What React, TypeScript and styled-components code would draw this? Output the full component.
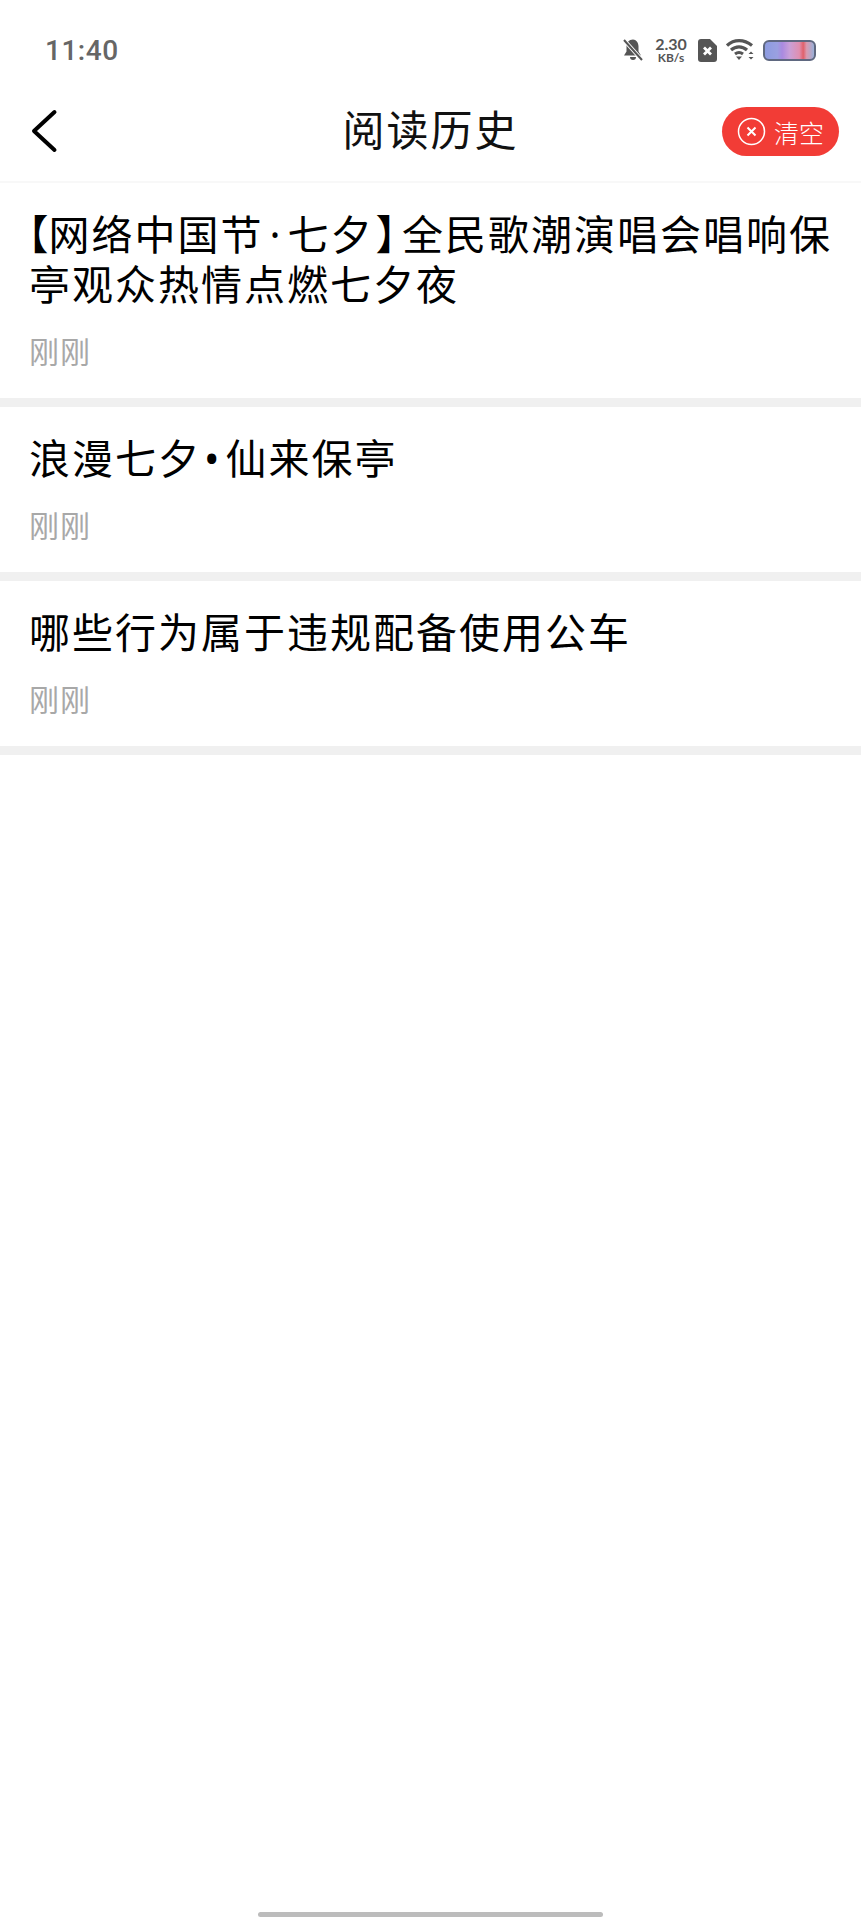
import React from 'react'
import styled, { createGlobalStyle } from 'styled-components'

const items = [
  {
    time: '刚刚',
    title: (
      <>
        <Punct $before={-2} $after={-1}>【</Punct>网络中国节<Punct $before={6} $after={5}>·</Punct>七夕
        <Punct $before={3} $after={3}>】</Punct>全民歌潮演唱会唱响保
        <br />
        亭观众热情点燃七夕夜
      </>
    ),
  },
  {
    time: '刚刚',
    title: (
      <>
        浪漫七夕<Punct $before={3} $after={4}>•</Punct>仙来保亭
      </>
    ),
  },
  { time: '刚刚', title: '哪些行为属于违规配备使用公车' },
]

const App = () => {
  return (
    <Page>
      <GlobalStyle />
      <StatusBar>
        <Time>11:40</Time>
        <StatusIcons>
          <svg width="22" height="24" viewBox="0 0 22 24">
            <path d="M11 1.5c-4 0-6.500 3-6.500 7v5L2 17.500h17l-2.500-4v-5c0-4-2.500-7-5.500-7z" fill="#555" />
            <path d="M8 19h6a3 3 0 0 1-6 0z" fill="#555" />
            <path d="M2 2l18 20" stroke="#fff" strokeWidth="4" />
            <path d="M2 2l18 20" stroke="#555" strokeWidth="2" />
          </svg>
          <NetSpeed>
            <NetValue>2.30</NetValue>
            <NetUnit>KB/s</NetUnit>
          </NetSpeed>
          <svg width="19" height="23" viewBox="0 0 19 23">
            <path d="M3 0h9l7 7v13a3 3 0 0 1-3 3H3a3 3 0 0 1-3-3V3a3 3 0 0 1 3-3z" fill="#555" />
            <path d="M6 8.500l7 7M13 8.500l-7 7" stroke="#fff" strokeWidth="2.800" />
          </svg>
          <svg width="28" height="22" viewBox="0 0 28 22">
            <path d="M1 6.500c7-6.500 17-6.500 25 0" stroke="#555" strokeWidth="3.200" fill="none" />
            <path d="M5 11c4.800-4.200 11.200-4.200 16 0" stroke="#555" strokeWidth="3.200" fill="none" />
            <path d="M9 15c2.800-2.200 5.200-2.200 8 0" stroke="#555" strokeWidth="3" fill="none" />
            <path d="M10 17.500h6L13 21z" fill="#555" />
            <path d="M22.500 15l2.500-2.500 2.500 2.500zM22.500 18l2.500 2.500 2.500-2.500z" fill="#555" />
          </svg>
          <Battery />
        </StatusIcons>
      </StatusBar>
      <Header>
        <BackButton>
          <svg width="30" height="44" viewBox="0 0 30 44">
            <path d="M24.500 3L4 22l20.500 19" stroke="#000" strokeWidth="4" strokeLinecap="round" strokeLinejoin="round" fill="none" />
          </svg>
        </BackButton>
        <HeaderTitle>阅读历史</HeaderTitle>
        <ClearButton>
          <svg width="29" height="29" viewBox="0 0 29 29">
            <circle cx="14.500" cy="14.500" r="13" stroke="#fff" strokeWidth="1.500" fill="none" />
            <path d="M10.500 10.500l8 8M18.500 10.500l-8 8" stroke="#fff" strokeWidth="2" />
          </svg>
          <ClearLabel>清空</ClearLabel>
        </ClearButton>
      </Header>
      <List>
        {items.map((item, i) => (
          <Item key={i}>
            <ItemTitle>{item.title}</ItemTitle>
            <ItemTime>{item.time}</ItemTime>
          </Item>
        ))}
      </List>
      <HomeBar />
    </Page>
  )
}

export default App

function Punct({ $before, $after, children }: { $before: number; $after: number; children: React.ReactNode }) {
  return (
    <PunctMark $before={$before} $after={$after}>
      {children}
    </PunctMark>
  )
}

const GlobalStyle = createGlobalStyle`
  html, body {
    margin: 0;
    padding: 0;
    background: #fff;
  }
`

const Page = styled.div`
  display: flex;
  flex-direction: column;
  width: 861px;
  height: 1920px;
  overflow: hidden;
  background: #fff;
  font-family: "Noto Sans CJK SC", "Noto Sans", sans-serif;
`

const StatusBar = styled.div`
  display: flex;
  align-items: center;
  justify-content: space-between;
  height: 50px;
  padding: 25px 45px 0 45px;
`

const Time = styled.span`
  font-family: Roboto, sans-serif;
  font-size: 28px;
  font-weight: 500;
  letter-spacing: 0.5px;
  color: #666;
`

const StatusIcons = styled.div`
  display: flex;
  align-items: center;
  gap: 9px;
`

const NetSpeed = styled.div`
  display: flex;
  flex-direction: column;
  align-items: center;
  gap: 1px;
  width: 36px;
  font-family: Lato, sans-serif;
  color: #555;
`

const NetValue = styled.span`
  font-size: 16px;
  font-weight: 700;
  line-height: 15px;
`

const NetUnit = styled.span`
  font-size: 12px;
  font-weight: 700;
  line-height: 12px;
`

const Battery = styled.div`
  width: 53px;
  height: 21px;
  box-sizing: border-box;
  border: 2px solid #5f6880;
  border-radius: 6px;
  background: linear-gradient(
    90deg,
    #8c9be0 0%,
    #9aa0e0 25%,
    #a98ae0 35%,
    #c9a0d8 50%,
    #e08fb0 70%,
    #e0606a 78%,
    #d99ab0 85%,
    #9ab0d8 100%
  );
`

const Header = styled.div`
  position: relative;
  display: flex;
  align-items: center;
  justify-content: center;
  height: 106px;
  border-bottom: 2px solid #f8f8f8;
`

const BackButton = styled.div`
  position: absolute;
  left: 30px;
  top: 34px;
  display: flex;
`

const HeaderTitle = styled.h1`
  margin: 0;
  font-size: 42px;
  font-weight: 400;
  letter-spacing: 2px;
  color: #111;
  line-height: 1;
`

const ClearButton = styled.div`
  position: absolute;
  left: 722px;
  top: 32px;
  display: flex;
  align-items: center;
  gap: 8px;
  width: 117px;
  height: 49px;
  box-sizing: border-box;
  padding-left: 15px;
  border-radius: 25px;
  background: #f23c36;
`

const ClearLabel = styled.span`
  font-size: 25px;
  font-weight: 300;
  color: #fff;
`

const List = styled.div`
  display: flex;
  flex-direction: column;
`

const Item = styled.div`
  padding: 26px 29px 26px;
  border-bottom: 9px solid #f0f0f0;
`

const ItemTitle = styled.div`
  font-family: "Noto Sans", "Noto Sans CJK SC", sans-serif;
  font-feature-settings: "palt";
  font-size: 41px;
  font-weight: 400;
  letter-spacing: 2px;
  line-height: 50px;
  color: #000;
`

const PunctMark = styled.span<{ $before: number; $after: number }>`
  margin-left: ${(p) => p.$before}px;
  margin-right: ${(p) => p.$after}px;
`

const ItemTime = styled.div`
  margin-top: 19px;
  font-size: 30px;
  font-weight: 400;
  letter-spacing: 1px;
  line-height: 44px;
  color: #a8a8a8;
`

const HomeBar = styled.div`
  align-self: center;
  width: 345px;
  height: 5px;
  margin-top: auto;
  margin-bottom: 3px;
  border-radius: 3px;
  background: #bcbcbc;
`
